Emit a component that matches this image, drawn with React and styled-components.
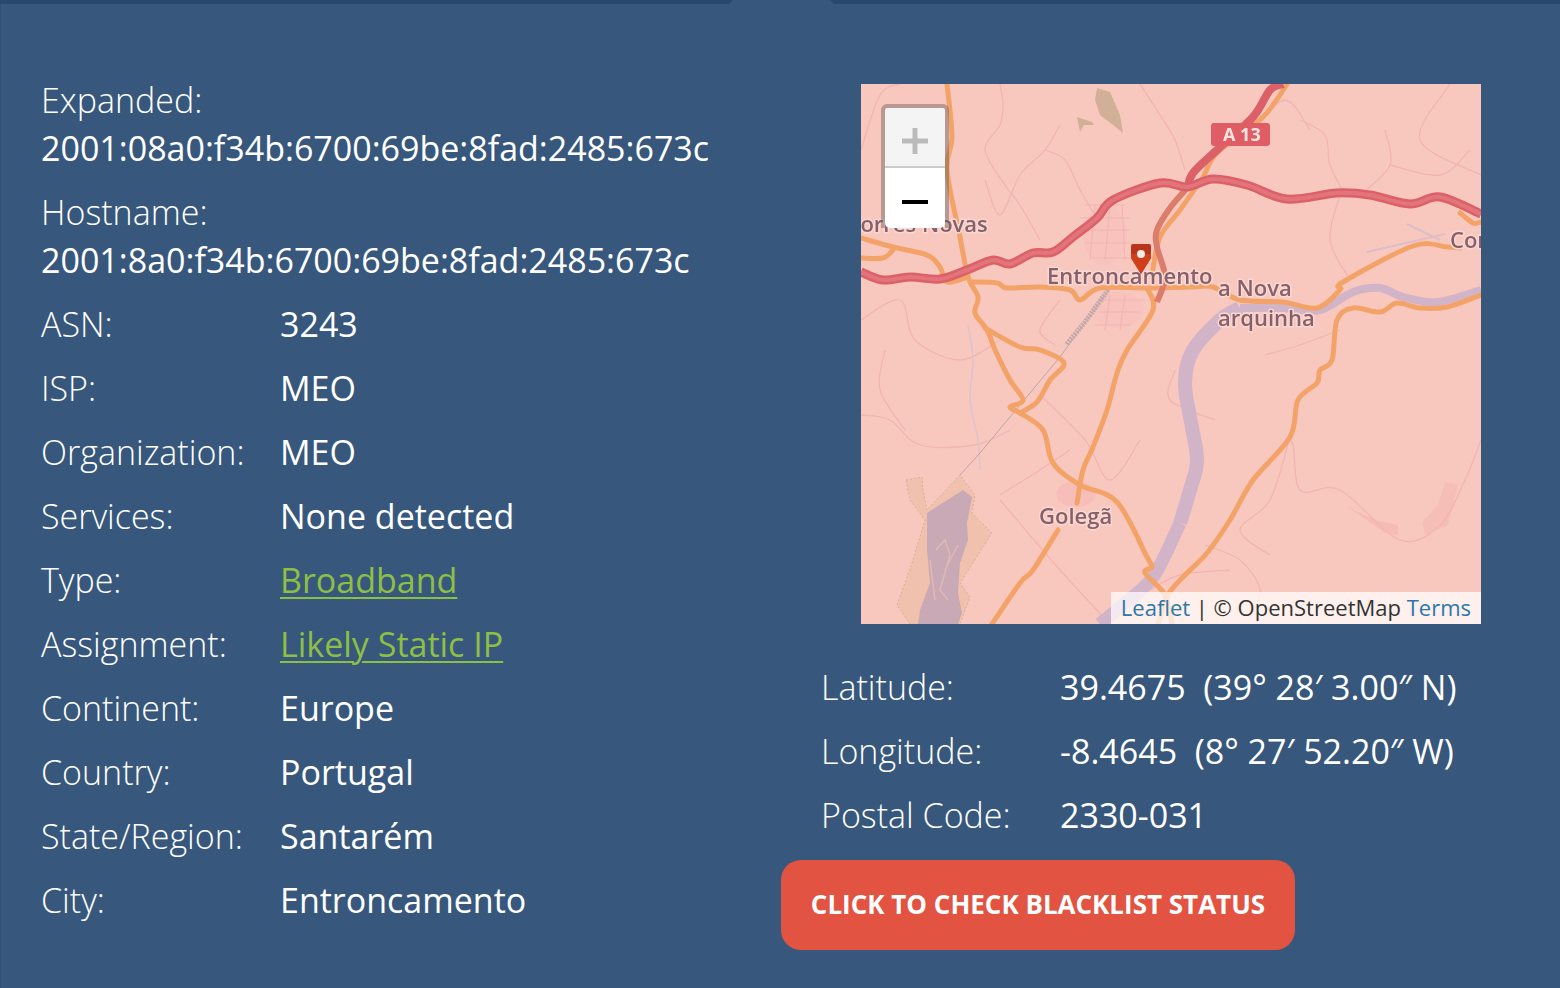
import React from 'react'
import styled, { createGlobalStyle } from 'styled-components'

const GlobalStyle = createGlobalStyle`
  html, body {
    margin: 0;
    background: #37587c;
  }
  body {
    font-family: "Open Sans", "Liberation Sans", sans-serif;
    color: #fff;
    overflow: hidden;
  }
`

const Page = styled.div`
  width: 1560px;
  height: 988px;
  box-sizing: border-box;
  border-left: 1px solid #2f5076;
  background: #37587c;
`

const TabEdge = styled.div`
  display: flex;
  height: 4px;
  margin-left: -1px;
  gap: 97px;
`

const EdgeLeft = styled.div`
  width: 733px;
  background: #27486f;
  clip-path: polygon(0 0, 100% 0, 99.5% 100%, 0 100%);
`

const EdgeRight = styled.div`
  flex: 1;
  background: #27486f;
  clip-path: polygon(0 0, 100% 0, 100% 100%, 4px 100%);
`

const Columns = styled.div`
  display: flex;
  padding-top: 72px;
`

const InfoColumn = styled.div`
  width: 780px;
  padding-left: 40px;
  box-sizing: border-box;
  display: flex;
  flex-direction: column;
  gap: 16px;
`

const SideColumn = styled.div`
  flex: 1;
  display: flex;
  flex-direction: column;
`

const Row = styled.div`
  display: grid;
  grid-template-columns: 239px 1fr;
  font-size: 34px;
  line-height: 48px;
  white-space: pre;
`

const Stack = styled.div`
  font-size: 34px;
  line-height: 48px;
  white-space: pre;
`

const Label = styled.div`
  font-weight: 300;
`

const Value = styled.div`
  font-weight: 400;
`

const ValueLink = styled.a`
  color: #8dbf45;
  text-decoration: underline;
  text-decoration-thickness: 2px;
  text-underline-offset: 4px;
`

const MapBox = styled.div`
  position: relative;
  width: 620px;
  height: 540px;
  margin: 8px 0 0 80px;
  background: #f8c8bf;
  overflow: hidden;
`

const MapSvg = styled.svg`
  display: block;
  width: 620px;
  height: 540px;
  filter: blur(0.6px);
`

const ZoomControl = styled.div`
  position: absolute;
  left: 20px;
  top: 20px;
  width: 60px;
  border: 4px solid rgba(90, 80, 80, 0.4);
  border-bottom: 0;
  border-radius: 6px 6px 0 0;
`

const ZoomButton = styled.div`
  height: ${p => p.$first ? 58 : 60}px;
  display: flex;
  align-items: center;
  justify-content: center;
  background: ${p => p.$first ? '#f4f4f4' : '#fff'};
  border-bottom: ${p => p.$first ? '2px solid #ccc' : '0'};
  border-radius: ${p => p.$first ? '3px 3px 0 0' : '0 0 5px 5px'};
`

const ZoomGlyph = styled.svg`
  margin-top: ${p => p.$shift}px;
`

const Attribution = styled.div`
  position: absolute;
  right: 0;
  bottom: 0;
  height: 32px;
  padding: 0 10px;
  background: rgba(255, 255, 255, 0.72);
  color: #333;
  font-size: 22px;
  line-height: 30px;
  white-space: pre;
`

const AttributionLink = styled.a`
  color: #2c78a8;
`

const GeoTable = styled.div`
  display: flex;
  flex-direction: column;
  gap: 16px;
  margin: 39px 0 0 40px;
`

const CheckButton = styled.button`
  align-self: flex-start;
  width: 514px;
  height: 90px;
  margin-top: 21px;
  padding: 0 0 2px;
  border: 0;
  border-radius: 20px;
  background: #e25341;
  color: #fff;
  font-family: inherit;
  font-size: 26px;
  font-weight: 700;
`

const MapLabel = styled.text`
  font-family: "Open Sans", "Noto Sans", sans-serif;
  font-size: 22px;
  font-weight: 600;
  fill: #876069;
  paint-order: stroke;
  stroke: #fad8d2;
  stroke-width: 3px;
  stroke-linejoin: round;
`

const ShieldText = styled.text`
  font-family: "Open Sans", sans-serif;
  font-size: 18px;
  font-weight: 700;
  fill: #fbe3de;
`

const line = pts => 'M' + pts.map(p => p.join(' ')).join('L')

// catmull-rom through the points, so roads don't look like polylines
const curve = pts => {
  let d = `M${pts[0][0]} ${pts[0][1]}`
  for (let i = 0; i < pts.length - 1; i++) {
    const p0 = pts[i - 1] || pts[i]
    const p1 = pts[i]
    const p2 = pts[i + 1]
    const p3 = pts[i + 2] || p2
    const c1x = p1[0] + (p2[0] - p0[0]) / 6
    const c1y = p1[1] + (p2[1] - p0[1]) / 6
    const c2x = p2[0] - (p3[0] - p1[0]) / 6
    const c2y = p2[1] - (p3[1] - p1[1]) / 6
    d += `C${c1x} ${c1y} ${c2x} ${c2y} ${p2[0]} ${p2[1]}`
  }
  return d
}

const minorRoads = [
  [[1000, 84], [1003, 105], [1000, 125], [985, 150], [1005, 185], [1020, 205], [1040, 240]],
  [[1060, 125], [1045, 150], [1020, 175], [1000, 215], [985, 180]],
  [[1045, 150], [1065, 160], [1080, 190], [1095, 215]],
  [[1140, 84], [1160, 115], [1175, 140], [1185, 170]],
  [[1300, 120], [1325, 135], [1330, 165], [1345, 195]],
  [[1385, 130], [1390, 165], [1360, 195]],
  [[1390, 165], [1440, 175], [1470, 150]],
  [[1340, 195], [1330, 240], [1350, 280]],
  [[861, 415], [890, 420], [920, 445], [975, 445], [1010, 430]],
  [[885, 350], [880, 390], [905, 430]],
  [[1000, 500], [1060, 570], [1110, 624]],
  [[1000, 495], [1040, 470], [1070, 450]],
  [[1040, 395], [1085, 440], [1110, 480], [1140, 440]],
  [[1205, 545], [1240, 560], [1260, 590], [1250, 620]],
  [[1255, 480], [1290, 440], [1300, 490], [1340, 490], [1400, 540], [1440, 525], [1465, 480], [1481, 440]],
  [[1290, 437], [1270, 500], [1240, 530], [1270, 555]],
  [[1150, 590], [1180, 575], [1230, 570]],
  [[1215, 420], [1170, 400], [1175, 370]],
  [[861, 320], [900, 300], [915, 340], [960, 360], [1000, 340]],
  [[1060, 300], [1040, 330], [1055, 345]],
  [[1340, 330], [1300, 345], [1265, 355]],
  [[1450, 84], [1420, 140], [1481, 175]],
  [[861, 150], [880, 95], [900, 84]],
  [[1250, 130], [1285, 100], [1310, 130]]
]

const orangeRoads = [
  [[947, 84], [952, 137], [947, 170], [960, 237], [968, 277], [978, 297], [975, 313], [987, 330], [996, 352], [1010, 380], [1023, 400], [1010, 407], [1020, 413], [1043, 430], [1053, 463], [1080, 485], [1117, 502], [1147, 557], [1152, 567], [1145, 573], [1165, 595], [1172, 624]],
  [[985, 328], [1020, 347], [1040, 350], [1064, 363], [1050, 380], [1037, 402], [1020, 413]],
  [[861, 238], [893, 247], [927, 255], [940, 267], [947, 282], [968, 277]],
  [[861, 258], [883, 258], [893, 250]],
  [[970, 282], [997, 283], [1007, 288], [1040, 287], [1070, 290], [1080, 300], [1100, 288], [1147, 288], [1190, 287], [1213, 287], [1240, 300], [1283, 302], [1317, 308], [1340, 290], [1343, 282], [1413, 246], [1447, 247], [1460, 248]],
  [[1147, 288], [1153, 310], [1127, 350], [1117, 373], [1107, 410], [1093, 447], [1083, 470], [1077, 503]],
  [[1058, 530], [1033, 570], [1020, 583], [992, 624]],
  [[1481, 295], [1447, 307], [1420, 308], [1397, 303], [1380, 312], [1353, 308], [1337, 320], [1332, 360], [1320, 370], [1317, 383], [1298, 400], [1290, 437], [1253, 480], [1230, 520], [1207, 553], [1183, 577], [1168, 595], [1158, 624]],
  [[1287, 84], [1263, 117], [1217, 153], [1203, 177], [1180, 210], [1160, 237], [1152, 275]],
  [[1460, 213], [1473, 223], [1481, 222]]
]

const motorway = [[861, 272], [883, 280], [910, 277], [940, 279], [967, 270], [993, 260], [1010, 264], [1033, 253], [1053, 252], [1073, 237], [1097, 218], [1113, 200], [1160, 183], [1187, 187], [1213, 179], [1247, 185], [1287, 199], [1337, 193], [1370, 195], [1410, 204], [1440, 197], [1481, 214]]

const a13Upper = [[1283, 84], [1270, 90], [1253, 117], [1217, 150], [1193, 173], [1188, 187]]
const a13Lower = [[1188, 187], [1170, 208], [1157, 230], [1157, 247], [1165, 277], [1157, 302]]

const riverUpper = [[1481, 290], [1437, 302], [1403, 297], [1380, 288], [1353, 292], [1320, 310], [1283, 308], [1240, 308]]
const riverMiddle = [[1240, 308], [1220, 320], [1192, 352], [1185, 383], [1190, 417], [1197, 460], [1190, 490], [1180, 523]]
const riverLower = [[1180, 523], [1153, 577], [1120, 607], [1100, 624]]

const townGrid = [
  [[1085, 205], [1125, 205]], [[1080, 218], [1130, 218]], [[1075, 230], [1130, 230]], [[1085, 243], [1130, 243]], [[1090, 258], [1135, 258]],
  [[1100, 300], [1145, 300]], [[1100, 312], [1140, 312]], [[1095, 325], [1130, 325]],
  [[1095, 205], [1090, 260]], [[1110, 205], [1105, 260]], [[1122, 205], [1125, 260]],
  [[1110, 295], [1105, 330]], [[1125, 295], [1120, 330]]
]

const lakeTracks = 'M936 550L945 540L950 555L940 590L948 600M945 570L958 545M930 560L935 600'

function MapDrawing() {
  return (
    <MapSvg viewBox="861 84 620 540">
      <path d="M906 480L922 477L923 490L927 510L960 475L975 495L972 513L992 533L960 583L970 597L960 624L910 624L897 605L912 563L925 520L910 500Z" fill="#f0c2ae" stroke="#d9ab98" strokeWidth="1" strokeDasharray="2 2" />
      <path d="M927 513L963 490L972 497L967 523L968 540L960 563L958 593L962 613L958 624L918 624L920 610L930 583L927 550Z" fill="#c9a9b5" />
      <path d={lakeTracks} fill="none" stroke="#e0b9b0" strokeWidth="1.5" />
      <path d="M1097 88L1110 92L1120 115L1123 133L1113 125L1100 115L1095 100Z" fill="#d2b097" />
      <path d="M1077 117L1092 122L1094 125L1084 125L1080 132Z" fill="#d2b097" />
      <path d="M1348 507L1375 520L1398 525L1398 535L1385 533Z" fill="#f5bcb5" />
      <path d="M1445 482L1458 485L1448 525L1425 535L1422 522L1438 505Z" fill="#f5bfb8" />
      <ellipse cx="1076" cy="494" rx="20" ry="13" fill="#f7beb9" />
      <ellipse cx="1105" cy="235" rx="22" ry="30" fill="#f7c3bc" />
      <ellipse cx="1118" cy="310" rx="26" ry="18" fill="#f7c3bc" />
      {minorRoads.map((pts, i) => (
        <path key={i} d={curve(pts)} fill="none" stroke="#f2b5b2" strokeWidth="1.3" />
      ))}
      {townGrid.map((pts, i) => (
        <path key={i} d={line(pts)} fill="none" stroke="#f3b3b1" strokeWidth="1" />
      ))}
      <path d={curve([[968, 325], [973, 360], [970, 400], [978, 440], [980, 470]])} fill="none" stroke="#ddc0d2" strokeWidth="1.3" />
      <path d="M1110 288L1060 357L980 453L960 475" fill="none" stroke="#bfa3a6" strokeWidth="1" />
      <path d="M1108 290L1085 322L1066 345" fill="none" stroke="#c4a8aa" strokeWidth="5" strokeDasharray="2 1" />
      <path d="M1407 224L1440 240M1367 252L1445 234" fill="none" stroke="#dfbdc8" strokeWidth="2" />
      <path d={curve(riverUpper)} fill="none" stroke="#d1b4c8" strokeWidth="8" />
      <path d={curve(riverMiddle)} fill="none" stroke="#d1b4c8" strokeWidth="14" />
      <path d={curve(riverLower)} fill="none" stroke="#d1b4c8" strokeWidth="13" />
      {orangeRoads.map((pts, i) => (
        <path key={i} d={curve(pts)} fill="none" stroke="#f3a368" strokeWidth="5" strokeLinejoin="round" strokeLinecap="round" />
      ))}
      <path d={curve(a13Upper)} fill="none" stroke="#dc6068" strokeWidth="8" strokeLinejoin="round" />
      <path d={curve(a13Lower)} fill="none" stroke="#dc7d6c" strokeWidth="6" strokeLinejoin="round" />
      <path d={curve(motorway)} fill="none" stroke="#dc6068" strokeWidth="9" strokeLinejoin="round" />
      <path d={curve(motorway)} fill="none" stroke="#e4747b" strokeWidth="4" strokeLinejoin="round" />
      <rect x="1211" y="123" width="59" height="23" rx="3" fill="#df5e66" />
      <ShieldText x="1223" y="141">A 13</ShieldText>
      <MapLabel x="848" y="232">Torres Novas</MapLabel>
      <MapLabel x="1047" y="284">Entroncamento</MapLabel>
      <MapLabel x="1218" y="296">a Nova</MapLabel>
      <MapLabel x="1218" y="326">arquinha</MapLabel>
      <MapLabel x="1450" y="248">Cor</MapLabel>
      <MapLabel x="1039" y="524">Golegã</MapLabel>
      <path d="M1133 244H1149Q1151 244 1151 246V258L1141 274L1131 258V246Q1131 244 1133 244Z" fill="#b8341a" />
      <path d="M1131 254H1151V258L1141 274L1131 258Z" fill="#cf3f1c" />
      <circle cx="1141" cy="254" r="4" fill="#f4ece8" />
    </MapSvg>
  )
}

const details = [
  ['ASN:', '3243'],
  ['ISP:', 'MEO'],
  ['Organization:', 'MEO'],
  ['Services:', 'None detected'],
  ['Type:', 'Broadband', true],
  ['Assignment:', 'Likely Static IP', true],
  ['Continent:', 'Europe'],
  ['Country:', 'Portugal'],
  ['State/Region:', 'Santarém'],
  ['City:', 'Entroncamento']
]

const geo = [
  ['Latitude:', '39.4675  (39° 28′ 3.00″ N)'],
  ['Longitude:', '-8.4645  (8° 27′ 52.20″ W)'],
  ['Postal Code:', '2330-031']
]

export default function App() {
  return (
    <Page>
      <GlobalStyle />
      <TabEdge>
        <EdgeLeft />
        <EdgeRight />
      </TabEdge>
      <Columns>
        <InfoColumn>
          <Stack>
            <Label>Expanded:</Label>
            <Value>2001:08a0:f34b:6700:69be:8fad:2485:673c</Value>
          </Stack>
          <Stack>
            <Label>Hostname:</Label>
            <Value>2001:8a0:f34b:6700:69be:8fad:2485:673c</Value>
          </Stack>
          {details.map(([label, value, isLink]) => (
            <Row key={label}>
              <Label>{label}</Label>
              <Value>{isLink ? <ValueLink>{value}</ValueLink> : value}</Value>
            </Row>
          ))}
        </InfoColumn>
        <SideColumn>
          <MapBox>
            <MapDrawing />
            <ZoomControl>
              <ZoomButton $first>
                <ZoomGlyph $shift={8} width="26" height="26" viewBox="0 0 26 26">
                  <path d="M13 0V26M0 13H26" stroke="#bbb" strokeWidth="5" />
                </ZoomGlyph>
              </ZoomButton>
              <ZoomButton>
                <ZoomGlyph $shift={8} width="26" height="6" viewBox="0 0 26 6">
                  <path d="M0 3H26" stroke="#000" strokeWidth="4" />
                </ZoomGlyph>
              </ZoomButton>
            </ZoomControl>
            <Attribution>
              <AttributionLink>Leaflet</AttributionLink> | © OpenStreetMap <AttributionLink>Terms</AttributionLink>
            </Attribution>
          </MapBox>
          <GeoTable>
            {geo.map(([label, value]) => (
              <Row key={label}>
                <Label>{label}</Label>
                <Value>{value}</Value>
              </Row>
            ))}
          </GeoTable>
          <CheckButton>CLICK TO CHECK BLACKLIST STATUS</CheckButton>
        </SideColumn>
      </Columns>
    </Page>
  )
}
